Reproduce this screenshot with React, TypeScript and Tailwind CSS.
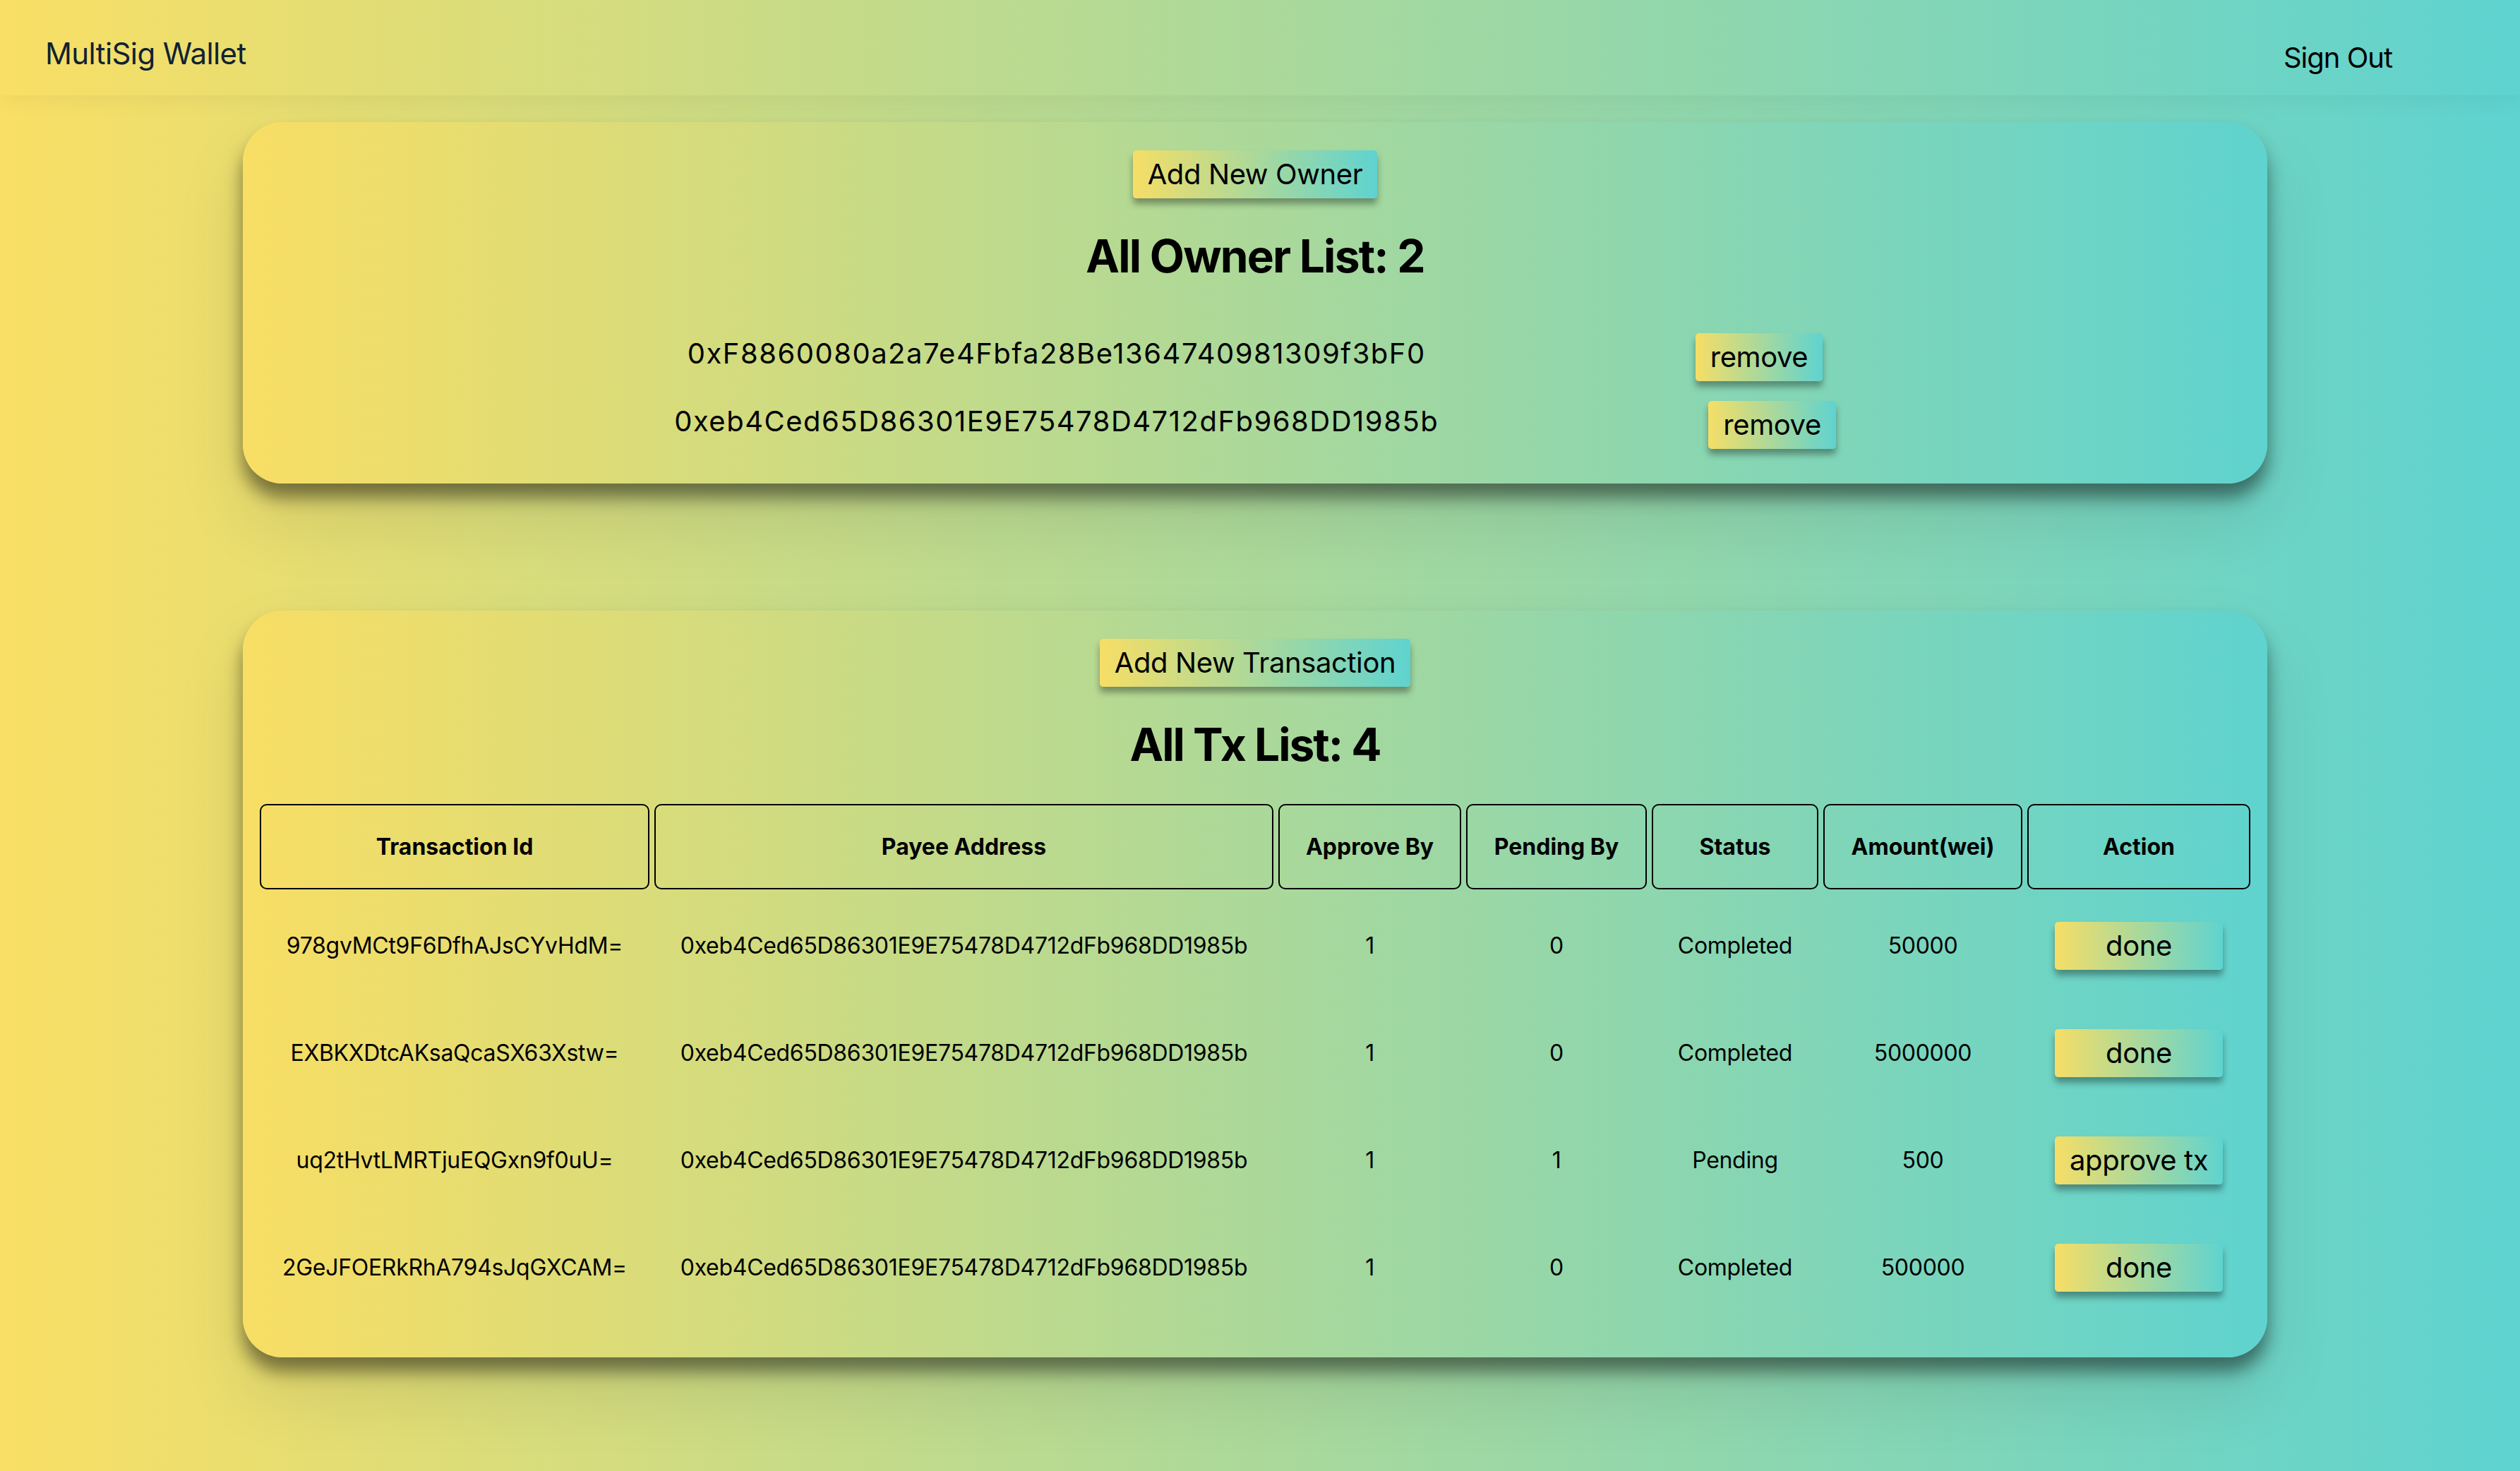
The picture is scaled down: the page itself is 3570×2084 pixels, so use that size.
import React from "react";

const owners = [
  "0xF8860080a2a7e4Fbfa28Be1364740981309f3bF0",
  "0xeb4Ced65D86301E9E75478D4712dFb968DD1985b",
];

const txs = [
  { id: "978gvMCt9F6DfhAJsCYvHdM=", payee: "0xeb4Ced65D86301E9E75478D4712dFb968DD1985b", approve: 1, pending: 0, status: "Completed", amount: "50000", action: "done" },
  { id: "EXBKXDtcAKsaQcaSX63Xstw=", payee: "0xeb4Ced65D86301E9E75478D4712dFb968DD1985b", approve: 1, pending: 0, status: "Completed", amount: "5000000", action: "done" },
  { id: "uq2tHvtLMRTjuEQGxn9f0uU=", payee: "0xeb4Ced65D86301E9E75478D4712dFb968DD1985b", approve: 1, pending: 1, status: "Pending", amount: "500", action: "approve tx" },
  { id: "2GeJFOERkRhA794sJqGXCAM=", payee: "0xeb4Ced65D86301E9E75478D4712dFb968DD1985b", approve: 1, pending: 0, status: "Completed", amount: "500000", action: "done" },
];

const headers = ["Transaction Id", "Payee Address", "Approve By", "Pending By", "Status", "Amount(wei)", "Action"];

function GradButton({ children, className = "" }: { children: React.ReactNode; className?: string }) {
  return (
    <button
      className={
        "h-[68px] px-[21px] rounded-[5px] text-[40px] leading-[40px] tracking-[-0.4px] whitespace-nowrap text-black bg-[linear-gradient(90deg,#f6de66,#5fd3d0)] shadow-[0_8px_10px_rgba(0,0,0,0.35)] " +
        className
      }
    >
      {children}
    </button>
  );
}

export default function App() {
  return (
    <div className="min-h-screen w-full bg-[linear-gradient(90deg,#f9df65_0%,#5ed3d0_100%)] [font-family:Inter,sans-serif] text-black">
      <header className="h-[135px] flex items-start justify-between pl-[64px] pr-[181px] shadow-[0_6px_30px_rgba(0,0,0,0.05)]">
        <div className="mt-[55px] text-[42px] leading-[42px] tracking-[-0.6px] text-[#0f2233]">MultiSig Wallet</div>
        <button className="mt-[62px] text-[40px] leading-[40px] tracking-[-1px] text-black">Sign Out</button>
      </header>

      <main className="pt-[38px] pb-[161px]">
        <section className="ml-[344px] w-[2868px] rounded-[56px] bg-[linear-gradient(90deg,#f8de64,#5fd3cf)] shadow-[0_20px_25px_rgba(0,0,0,0.45),0_50px_100px_rgba(0,0,0,0.1)] pt-[40px] pb-[49px] flex flex-col items-center">
          <GradButton>Add New Owner</GradButton>
          <h1 className="mt-[50px] text-[64px] leading-[64px] font-bold tracking-[-1.8px]">All Owner List: {owners.length}</h1>
          <div className="mt-[77px] flex flex-col gap-[28px] w-full">
            {owners.map((o) => (
              <div key={o} className="flex items-center justify-center gap-[382px]">
                <span className="text-[40px] leading-[40px] tracking-[1.5px] mb-[10px]">{o}</span>
                <GradButton>remove</GradButton>
              </div>
            ))}
          </div>
        </section>

        <section className="mt-[180px] ml-[344px] w-[2868px] rounded-[56px] bg-[linear-gradient(90deg,#f8de64,#5fd3cf)] shadow-[0_20px_25px_rgba(0,0,0,0.45),0_50px_100px_rgba(0,0,0,0.1)] pt-[40px] px-[17px] pb-[48px] flex flex-col items-center">
          <GradButton>Add New Transaction</GradButton>
          <h1 className="mt-[50px] text-[64px] leading-[64px] font-bold tracking-[-2px]">All Tx List: {txs.length}</h1>
          <table className="mt-[45px] w-full table-fixed border-separate border-spacing-[7px]">
            <colgroup>
              <col className="w-[552px]" />
              <col className="w-[877px]" />
              <col className="w-[259px]" />
              <col className="w-[256px]" />
              <col className="w-[236px]" />
              <col className="w-[282px]" />
              <col className="w-[316px]" />
            </colgroup>
            <thead>
              <tr>
                {headers.map((h) => (
                  <th key={h} className="h-[121px] border-2 border-black rounded-[10px] text-[32px] leading-[32px] font-bold text-center">
                    {h}
                  </th>
                ))}
              </tr>
            </thead>
            <tbody>
              {txs.map((t) => (
                <tr key={t.id} className="text-[32px] leading-[32px] tracking-[-0.3px]">
                  <td className="h-[145px] text-center">{t.id}</td>
                  <td className="text-center">{t.payee}</td>
                  <td className="text-center">{t.approve}</td>
                  <td className="text-center">{t.pending}</td>
                  <td className="text-center">{t.status}</td>
                  <td className="text-center">{t.amount}</td>
                  <td className="text-center">
                    <GradButton className="w-[238px] px-0">{t.action}</GradButton>
                  </td>
                </tr>
              ))}
            </tbody>
          </table>
        </section>
      </main>
    </div>
  );
}
